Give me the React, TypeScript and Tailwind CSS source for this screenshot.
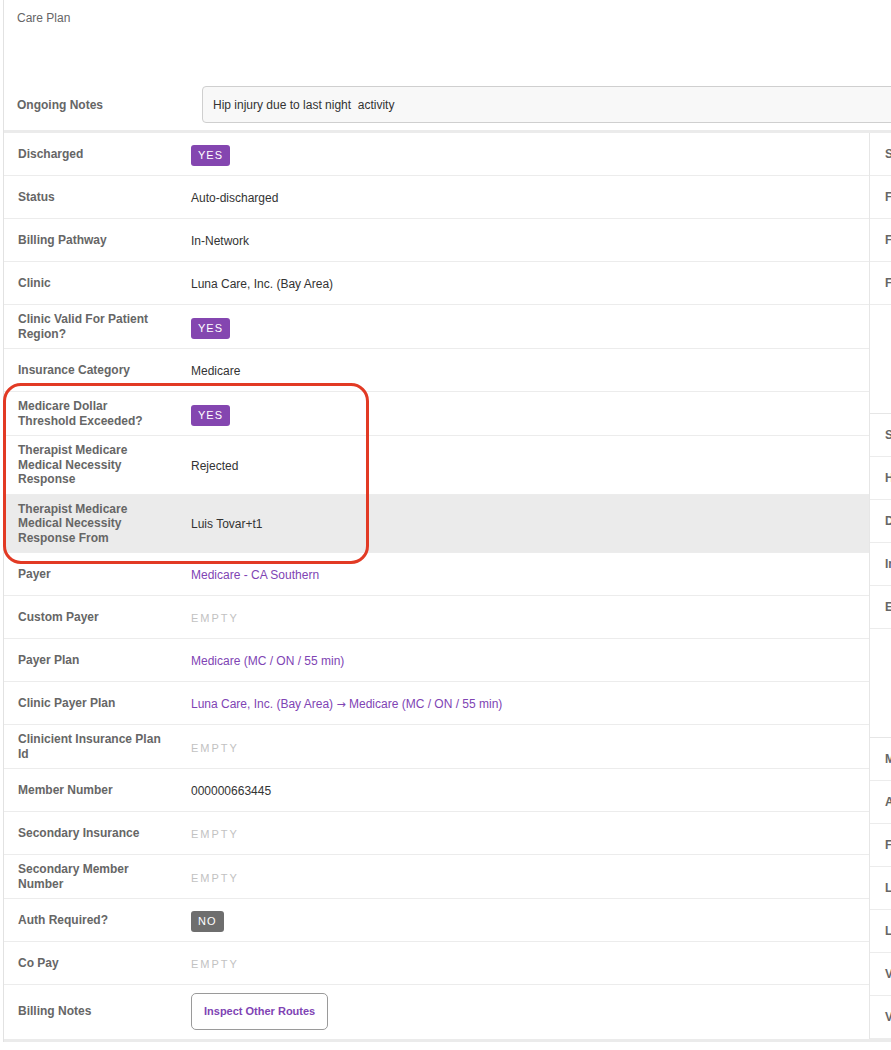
import React from "react"

type Field = {
  label: string
  value?: React.ReactNode
  kind?: "text" | "link" | "yes" | "no" | "empty" | "button"
  shaded?: boolean
}

const fields: Field[] = [
  { label: "Discharged", kind: "yes" },
  { label: "Status", value: "Auto-discharged" },
  { label: "Billing Pathway", value: "In-Network" },
  { label: "Clinic", value: "Luna Care, Inc. (Bay Area)" },
  { label: "Clinic Valid For Patient Region?", kind: "yes" },
  { label: "Insurance Category", value: "Medicare" },
  { label: "Medicare Dollar Threshold Exceeded?", kind: "yes" },
  { label: "Therapist Medicare Medical Necessity Response", value: "Rejected" },
  { label: "Therapist Medicare Medical Necessity Response From", value: "Luis Tovar+t1", shaded: true },
  { label: "Payer", value: "Medicare - CA Southern", kind: "link" },
  { label: "Custom Payer", kind: "empty" },
  { label: "Payer Plan", value: "Medicare (MC / ON / 55 min)", kind: "link" },
  {
    label: "Clinic Payer Plan",
    value: (
      <>
        Luna Care, Inc. (Bay Area) <span className="font-['DejaVu_Sans',sans-serif] text-[11px]">{"\u2192"}</span> Medicare (MC / ON / 55 min)
      </>
    ),
    kind: "link",
  },
  { label: "Clinicient Insurance Plan Id", kind: "empty" },
  { label: "Member Number", value: "000000663445" },
  { label: "Secondary Insurance", kind: "empty" },
  { label: "Secondary Member Number", kind: "empty" },
  { label: "Auth Required?", kind: "no" },
  { label: "Co Pay", kind: "empty" },
  { label: "Billing Notes", kind: "button" },
]

const sideGroups = [
  ["Start Date", "First Visit Date", "Frequency", "Follow Up Date"],
  ["Surgery Date", "Height", "Date Of Birth", "Injury Date", "Email"],
  ["Mobile Phone", "Address", "Fax", "Last Visit", "Last Login", "Visits Used", "Visits Remaining"],
]

function Value({ f }: { f: Field }) {
  switch (f.kind) {
    case "yes":
      return (
        <span className="inline-block rounded-[3px] bg-[#8446b0] px-[7px] py-[4px] text-[11px] leading-[13px] tracking-[1px] text-white">
          YES
        </span>
      )
    case "no":
      return (
        <span className="inline-block rounded-[3px] bg-[#6e6e6e] px-[7px] py-[4px] text-[11px] leading-[13px] tracking-[1px] text-white">
          NO
        </span>
      )
    case "empty":
      return <span className="text-[11px] tracking-[2px] text-[#c2c2c2]">EMPTY</span>
    case "link":
      return <span className="text-[12px] text-[#8044b4]">{f.value}</span>
    case "button":
      return (
        <button className="h-[37px] rounded-[5px] border border-[#9a9a9a] bg-white px-[12px] text-[11px] font-bold text-[#8044b4]">
          Inspect Other Routes
        </button>
      )
    default:
      return <span className="text-[12px] text-[#333]">{f.value}</span>
  }
}

export default function App() {
  return (
    <div className="relative min-h-screen w-full overflow-hidden bg-white font-['Liberation_Sans',Arial,sans-serif]">
      <div className="ml-[3px] border-l border-[#e2e2e2]">
        {/* header */}
        <div className="pl-[13px] pt-[11px] text-[12px] leading-[15px] text-[#666]">Care Plan</div>
        <div className="mt-[60px] mb-[7px] flex items-center">
          <div className="w-[198px] shrink-0 pl-[13px] text-[12px] font-bold text-[#666]">Ongoing Notes</div>
          <div className="flex h-[37px] min-w-[720px] flex-1 items-center whitespace-pre rounded-[4px] border border-[#cfcfcf] bg-[#f8f8f8] pl-[10px] text-[12px] text-[#333]">
            Hip injury due to last night  activity
          </div>
        </div>

        {/* table */}
        <div className="flex border-y-[3px] border-[#ebebeb]">
          <div className="w-[866px] shrink-0 border-r border-[#e6e6e6]">
            {fields.map((f, i) => (
              <div
                key={i}
                className={
                  "flex min-h-[43px] items-center border-b border-[#ececec] " +
                  (f.kind === "button" ? "py-[8px] " : "py-[7px] ") +
                  (i === fields.length - 1 ? "border-b-0 " : "") +
                  (f.shaded ? "bg-[#ebebeb]" : "bg-white")
                }
              >
                <div className="w-[187px] shrink-0 pl-[14px] pr-[30px] text-[12px] font-bold leading-[14.5px] text-[#666]">
                  {f.label}
                </div>
                <div className="flex-1">
                  <Value f={f} />
                </div>
              </div>
            ))}
          </div>

          <div className="flex min-w-0 flex-1 flex-col overflow-hidden">
            {sideGroups.map((g, gi) => (
              <div key={gi} className={gi > 0 ? "mt-[108px] border-t border-[#e6e6e6]" : ""}>
                {g.map((l) => (
                  <div
                    key={l}
                    className="flex h-[43px] items-center whitespace-nowrap border-b border-[#ececec] pl-[15px] text-[12px] font-bold text-[#666]"
                  >
                    {l}
                  </div>
                ))}
              </div>
            ))}
          </div>
        </div>
      </div>

      {/* annotation */}
      <div className="pointer-events-none absolute left-[3px] top-[383px] h-[181px] w-[366px] rounded-[18px] border-[3px] border-[#e23a24]" />
    </div>
  )
}
